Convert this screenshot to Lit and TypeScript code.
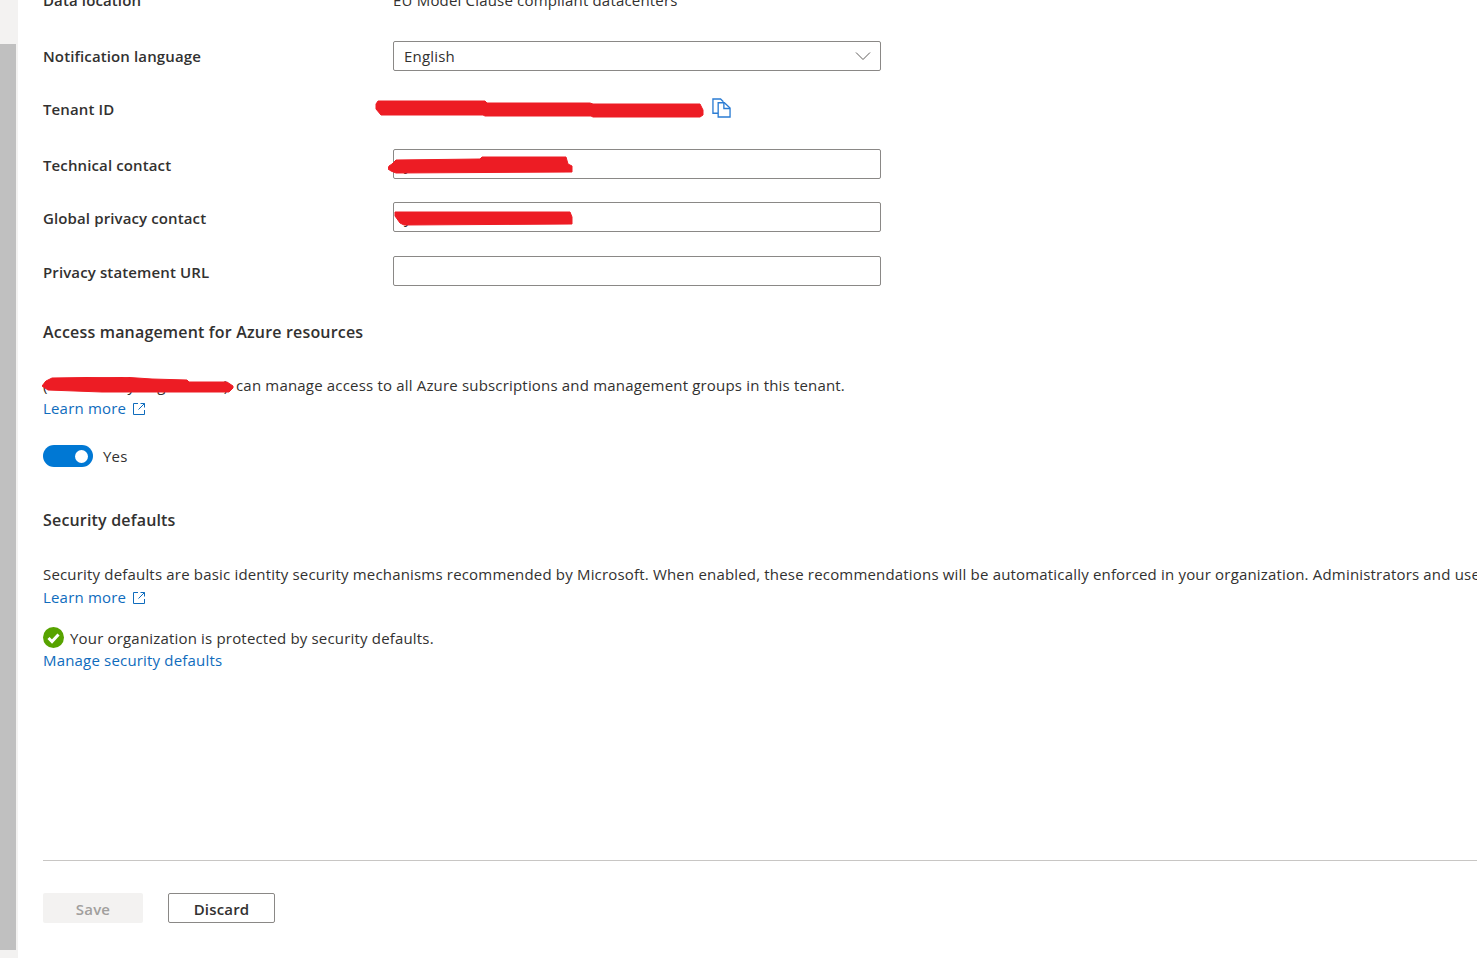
import { LitElement, html, css, svg } from "lit";
import { customElement } from "lit/decorators.js";

const extIcon = html`<svg class="ext" viewBox="0 0 12 12" width="12" height="12" fill="none" stroke="#0f6cbd" stroke-width="1"><path d="M5 .5H.5v11h11V7M7.500 .5h4v4M11.500 .5 5.500 6.500"/></svg>`;

const scribble = (cls: string, w: number, h: number, d: string) =>
  html`<svg class="scribble ${cls}" width=${w} height=${h} viewBox="0 0 ${w} ${h}">${svg`<path d=${d} fill="#ed1c24" stroke="#ed1c24" stroke-width="1" stroke-linejoin="round"/>`}</svg>`;

@customElement("app-root")
export class AppRoot extends LitElement {
  static styles = css`
    :host { display: block; width: 1477px; height: 958px; overflow: hidden; position: relative; background: #fff; font-family: "Open Sans", "Noto Sans", sans-serif; font-size: 15px; color: #323130; letter-spacing: 0.18px; }
    .page { display: flex; height: 958px; }
    .rail { width: 18px; flex: none; background: #f3f2f1; }
    .thumb { width: 16px; height: 906px; margin-top: 44px; background: #c0c0c0; }
    .main { flex: 1; min-width: 0; margin-top: -15px; padding-left: 25px; overflow: hidden; display: flex; flex-direction: column; }
    .row { display: flex; align-items: center; height: 30px; margin-bottom: 23px; white-space: nowrap; }
    .row.first { margin-bottom: 26px; }
    .row.tenant { margin-bottom: 25px; }
    .row.global { margin-bottom: 24px; }
    .lbl { width: 350px; flex: none; font-weight: 600; letter-spacing: 0.12px; }
    .lbl.low { padding-top: 2px; }
    .input, .select { width: 488px; height: 30px; box-sizing: border-box; border: 1px solid #8a8886; border-radius: 2px; background: #fff; display: flex; align-items: center; justify-content: space-between; padding: 0 10px; }
    .select svg { margin-right: -1px; }
    .copy { margin-left: 319px; margin-top: -2px; }
    h2 { margin: 0; font-size: 16px; font-weight: 600; line-height: 24px; white-space: nowrap; }
    h2.access { margin-top: 11px; }
    h2.security { margin-top: 41px; }
    .line { line-height: 23px; height: 23px; white-space: nowrap; }
    .line.para { margin-top: 30px; }
    h2.security + .line.para { margin-top: 31px; }
    .who { display: inline-flex; width: 193px; }
    .who .y { margin-left: 80px; }
    .who .g { margin-left: 22px; }
    .who .c { margin-left: 58px; }
    a { color: #0f6cbd; text-decoration: none; }
    .ext { margin-left: 3px; vertical-align: -1px; }
    .toggle-row { display: flex; align-items: center; gap: 10px; height: 22px; margin-top: 25px; }
    .toggle { width: 50px; height: 22px; border-radius: 11px; background: #0078d4; display: flex; align-items: center; justify-content: flex-end; padding-right: 5px; box-sizing: border-box; }
    .knob { width: 13px; height: 13px; border-radius: 50%; background: #fff; }
    .status { display: flex; align-items: center; gap: 6px; height: 22px; white-space: nowrap; margin-top: 18px; }
    .status svg { margin-top: -2px; }
    hr { border: 0; border-top: 1px solid #c8c6c4; margin: 188px 0 0; }
    .actions { display: flex; gap: 25px; margin-top: 32px; }
    button { font: inherit; letter-spacing: inherit; font-weight: 600; height: 30px; border-radius: 2px; box-sizing: border-box; padding: 1px 0 0; }
    .save { width: 100px; background: #f3f2f1; border: 0; color: #a19f9d; }
    .discard { width: 107px; background: #fff; border: 1px solid #8a8886; color: #323130; }
    .scribble { position: absolute; }
    .s1 { left: 375px; top: 100px; }
    .s2 { left: 388px; top: 156px; }
    .s3 { left: 394px; top: 211px; }
    .s4 { left: 42px; top: 377px; }
  `;

  render() {
    return html`
      <div class="page">
        <div class="rail"><div class="thumb"></div></div>
        <div class="main">
          <div class="row first"><span class="lbl">Data location</span><span>EU Model Clause compliant datacenters</span></div>
          <div class="row"><span class="lbl">Notification language</span>
            <div class="select"><span>English</span>
              <svg width="16" height="10" viewBox="0 0 16 10" fill="none" stroke="#605e5c" stroke-width="1"><path d="M1 1.500 8 8.500 15 1.500"/></svg>
            </div>
          </div>
          <div class="row tenant"><span class="lbl">Tenant ID</span>
            <svg class="copy" width="19" height="20" viewBox="0 0 20 21" fill="none" stroke="#2b7cd3" stroke-width="1.400"><path d="M7 16H1V1h8l3 3"/><path d="M6.500 5h6.500l6 5.500V20H6.500z" fill="#fff"/><path d="M12.500 5v6h6.500"/></svg>
          </div>
          <div class="row"><span class="lbl low">Technical contact</span><div class="input"><span>y</span></div></div>
          <div class="row global"><span class="lbl low">Global privacy contact</span><div class="input"><span>y</span></div></div>
          <div class="row"><span class="lbl low">Privacy statement URL</span><div class="input"></div></div>
          <h2 class="access">Access management for Azure resources</h2>
          <div class="line para">
            <span class="who"><span>(</span><span class="y">y</span><span class="g">g</span><span class="c">)</span></span>can manage access to all Azure subscriptions and management groups in this tenant.
          </div>
          <div class="line"><a href="#">Learn more ${extIcon}</a></div>
          <div class="toggle-row">
            <div class="toggle"><div class="knob"></div></div><span>Yes</span>
          </div>
          <h2 class="security">Security defaults</h2>
          <div class="line para">Security defaults are basic identity security mechanisms recommended by Microsoft. When enabled, these recommendations will be automatically enforced in your organization. Administrators and users will be better protected from common identity related attacks.</div>
          <div class="line"><a href="#">Learn more ${extIcon}</a></div>
          <div class="status">
            <svg width="21" height="21" viewBox="0 0 21 21"><circle cx="10.500" cy="10.500" r="10.500" fill="#57a300"/><path d="M5.500 11l3.500 3.500 6.500-7" fill="none" stroke="#fff" stroke-width="3"/></svg>
            <span>Your organization is protected by security defaults.</span>
          </div>
          <div class="line"><a href="#">Manage security defaults</a></div>
          <hr />
          <div class="actions">
            <button class="save">Save</button><button class="discard">Discard</button>
          </div>
        </div>
      </div>
      ${scribble("s1", 329, 18, "M3 1 110 1 112 3 215 3 218 4 325 4 328 10 328 15 325 17 218 17 216 16 110 16 108 15 6 15 1 9 1 4Z")}
      ${scribble("s2", 186, 18, "M8 4 92 3 94 1 178 1 180 8 184 10 184 16 8 17 3 15 0 13 1 10 4 8Z")}
      ${scribble("s3", 179, 15, "M1 1 176 1 178 6 178 13 10 14 6 12 1 5Z")}
      ${scribble("s4", 193, 17, "M10 1 80 0 110 2 145 3 147 5 185 5 191 9 191 11 187 15 60 15 6 13 0 9 4 4Z")}
    `;
  }
}
